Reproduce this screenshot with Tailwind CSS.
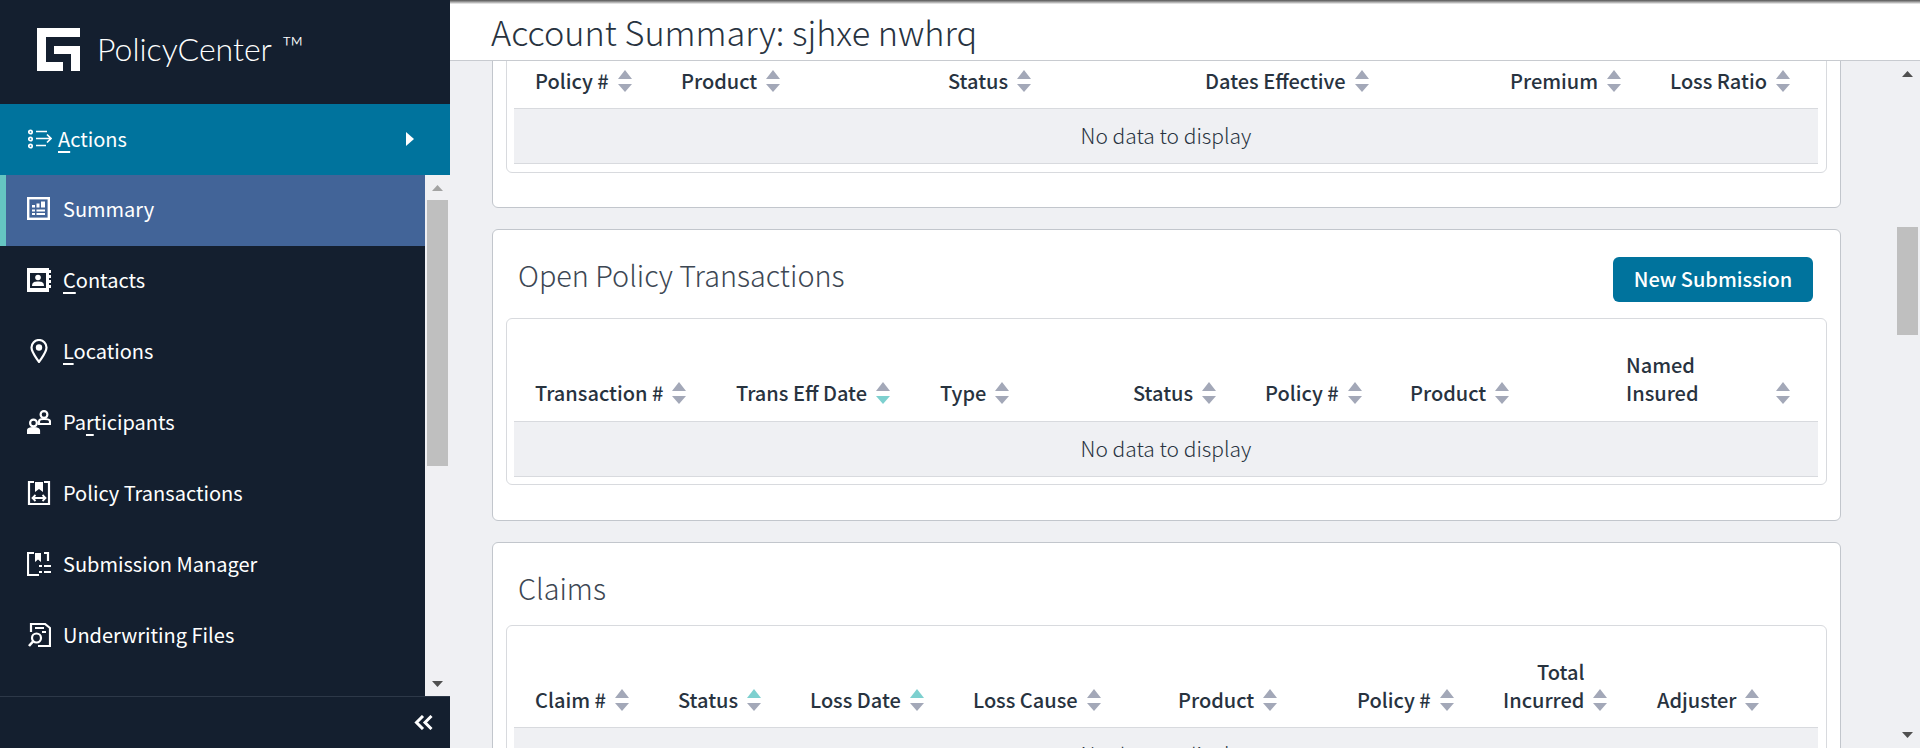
<!DOCTYPE html>
<html lang="en">
<head>
  <meta charset="UTF-8" />
  <title>Account Summary</title>
  <script src="https://cdn.jsdelivr.net/npm/@tailwindcss/browser@4"></script>
</head>
<body class="h-[748px] overflow-hidden bg-[#eff0f3] text-[#28333f] font-['Noto_Sans_CJK_SC',sans-serif]">

<!-- sort arrows, reused in every table head -->
<svg class="hidden">
  <symbol id="sort" viewBox="0 0 14 22"><path fill="#a3a8b8" d="M7 0L14 9H0ZM0 14H14L7 22Z"/></symbol>
  <symbol id="sort-asc" viewBox="0 0 14 22"><path fill="#7dd0cf" d="M7 0L14 9H0Z"/><path fill="#a3a8b8" d="M0 14H14L7 22Z"/></symbol>
  <symbol id="sort-desc" viewBox="0 0 14 22"><path fill="#a3a8b8" d="M7 0L14 9H0Z"/><path fill="#7dd0cf" d="M0 14H14L7 22Z"/></symbol>
</svg>

<div class="flex h-[748px]">

  <!-- sidebar -->
  <aside class="w-[450px] shrink-0 flex flex-col bg-[#141f2f] text-white">
    <div class="h-[104px] shrink-0 flex items-center pl-[37px] pb-[5px]">
      <svg class="w-[43px] h-[43px]" viewBox="0 0 43 43" fill="#fff"><path d="M0 0H43V9H9V34H26V43H0ZM17 18H43V43H34V26H17Z"/></svg>
      <span class="ml-[17px] mt-[10px] text-[32px] font-light font-['Lato',sans-serif] leading-none">PolicyCenter<sup class="ml-[10px] text-[30px] align-[-12px] leading-none">™</sup></span>
    </div>
    <div class="h-[71px] shrink-0 flex items-center bg-[#00739d] pl-[28px] pr-[36px] pb-[2px]">
      <svg class="w-[24px] h-[20px]" viewBox="0 0 24 20" fill="none" stroke="#fff" stroke-width="1.7"><circle cx="2.5" cy="3" r="1.7"/><circle cx="2.5" cy="10" r="1.7"/><circle cx="2.5" cy="17" r="1.7"/><path d="M8 2.5H19M8 9.5H23M19 5.5L23 9.5L19 13.5M8 16.5H18"/></svg>
      <span class="ml-[6px] text-[20px]"><u class="underline-offset-4">A</u>ctions</span>
      <svg class="ml-auto w-[8px] h-[14px]" viewBox="0 0 8 14" fill="#fff"><path d="M0 0L8 7L0 14Z"/></svg>
    </div>
    <div class="relative flex-1 min-h-0 flex overflow-hidden">
      <nav class="w-[425px] shrink-0 text-[20px]">
        <a class="h-[71px] flex items-center bg-[#426498] border-l-[6px] border-[#65c5c2] pl-[21px] pb-[4px]">
          <svg class="w-[23px] h-[23px]" viewBox="0 0 23 23" fill="none" stroke="#fff"><rect x="1.2" y="1.2" width="20.6" height="20.6" stroke-width="2.4"/><path fill="#fff" stroke="none" d="M5 8H8V10.5H5ZM9.5 6.5H12.5V10.5H9.5ZM14 4.5H18V10.5H14ZM5 12.5H8V14.5H5ZM9.5 12.5H18V14.5H9.5ZM5 16H8V18H5ZM9.5 16H18V18H9.5Z"/></svg>
          <span class="ml-[13px]">Summary</span>
        </a>
        <a class="h-[71px] flex items-center pl-[27px] pb-[4px]">
          <svg class="w-[24px] h-[24px]" viewBox="0 0 24 24" fill="#fff"><path fill-rule="evenodd" d="M0 0H22V2H24V5H22V7H24V10H22V12H24V15H22V17H24V20H22V24H0ZM3 5V20H19V5Z"/><circle cx="11" cy="9.5" r="2.8"/><path d="M5 18C5 14 8 13.5 11 13.5S17 14 17 18Z"/></svg>
          <span class="ml-[12px]"><u class="underline-offset-4">C</u>ontacts</span>
        </a>
        <a class="h-[71px] flex items-center pl-[27px] pb-[4px]">
          <svg class="w-[24px] h-[24px]" viewBox="0 0 24 24" fill="none" stroke="#fff" stroke-width="2.2"><path d="M12 23C8 17 4.5 13 4.5 8.5A7.5 7.5 0 0 1 19.5 8.5C19.5 13 16 17 12 23Z"/><circle cx="12" cy="8.5" r="3.2" fill="#fff" stroke="none"/></svg>
          <span class="ml-[12px]"><u class="underline-offset-4">L</u>ocations</span>
        </a>
        <a class="h-[71px] flex items-center pl-[27px] pb-[4px]">
          <svg class="w-[24px] h-[24px]" viewBox="0 0 24 24" fill="none" stroke="#fff" stroke-width="2.2"><circle cx="6.5" cy="13" r="3.4"/><path d="M1 23V20.5C1 18.5 3 18 6.5 18S12 18.5 12 20.5V23Z" fill="#fff"/><circle cx="17" cy="4.5" r="3.4"/><path d="M12 14V11.5C12 9.5 14 9 17 9S23 9.5 23 11.5V14Z"/></svg>
          <span class="ml-[12px]">Pa<u class="underline-offset-4">r</u>ticipants</span>
        </a>
        <a class="h-[71px] flex items-center pl-[27px] pb-[4px]">
          <svg class="w-[24px] h-[24px]" viewBox="0 0 24 24" fill="none" stroke="#fff" stroke-width="2.2"><path d="M7 1H2V23H22V1H17"/><path d="M8 1H16V11L12 8L8 11Z" fill="#fff" stroke="none"/><path d="M5.5 17H18.5M8.5 14L5.5 17L8.5 20M15.5 14L18.5 17L15.5 20" stroke-width="1.8"/></svg>
          <span class="ml-[12px]">Policy Transactions</span>
        </a>
        <a class="h-[71px] flex items-center pl-[27px] pb-[4px]">
          <svg class="w-[24px] h-[24px]" viewBox="0 0 24 24" fill="none" stroke="#fff" stroke-width="2.2"><path d="M7 1H1V23H12M17 1H21V9"/><path d="M8 1H14V10L11 7.5L8 10Z" fill="#fff" stroke="none"/><path d="M12 14H15M17 14H24M12 20H15M17 20H24"/></svg>
          <span class="ml-[12px]">Submission Manager</span>
        </a>
        <a class="h-[71px] flex items-center pl-[27px] pb-[4px]">
          <svg class="w-[24px] h-[24px]" viewBox="0 0 24 24" fill="none" stroke="#fff" stroke-width="2.2"><path d="M4 9V1H18L23 5V23H11"/><path d="M8 5H17M15 9H19"/><circle cx="9.5" cy="15" r="4.5"/><path d="M6 18.5L2 23" stroke-width="2.6"/></svg>
          <span class="ml-[12px]">Underwriting Files</span>
        </a>
        <a class="h-[71px] flex items-center pl-[27px] pb-[4px]">
          <svg class="w-[24px] h-[24px]" viewBox="0 0 24 24" fill="none" stroke="#fff" stroke-width="2.2"><circle cx="6" cy="7" r="3"/><path d="M3 23V18C3 15 7 14 12 14S21 15 21 18V23"/></svg>
        </a>
      </nav>
      <div class="w-[25px] shrink-0 bg-[#f0f0f3] flex flex-col items-center pr-[1px]">
        <div class="h-[25px] shrink-0 flex items-center justify-center"><svg class="w-[11px] h-[6px]" viewBox="0 0 11 6" fill="#a3a3a3"><path d="M5.5 0L11 6H0Z"/></svg></div>
        <div class="h-[266px] w-[21px] bg-[#bfbfbf]"></div>
        <div class="mt-auto h-[25px] flex items-center justify-center"><svg class="w-[11px] h-[6px]" viewBox="0 0 11 6" fill="#505050"><path d="M0 0H11L5.5 6Z"/></svg></div>
      </div>
    </div>
    <div class="h-[52px] shrink-0 flex items-center justify-end border-t border-[#2d3848] pr-[17px] bg-[#141f2f]">
      <svg class="w-[19px] h-[15px]" viewBox="0 0 19 15" fill="none" stroke="#fff" stroke-width="3"><path d="M9 1L2.5 7.5L9 14M17.5 1L11 7.5L17.5 14"/></svg>
    </div>
  </aside>

  <!-- main -->
  <div class="flex-1 min-w-0 flex flex-col">
    <header class="h-[61px] shrink-0 border-b border-[#c8cbd0] pl-[41px] pt-[1px] bg-gradient-to-b from-[#555555] via-white via-[7%] to-white">
      <h1 class="text-[34.3px] leading-[60px] font-extralight">Account Summary: sjhxe nwhrq</h1>
    </header>
    <div class="flex-1 min-h-0 flex">
      <div class="flex-1 min-w-0 overflow-hidden pl-[42px] pr-[56px]">
        <div class="-mt-[41px] flex flex-col gap-[21px]">

          <section class="bg-white border border-[#c2c6cc] rounded-[6px] pt-[16px] pb-[34px] px-[13px]">
            <div class="border border-[#d8dade] rounded-[6px] px-[7px] pb-[8px] pt-[17px]">
              <table class="w-[1304px] table-fixed">
                <thead>
                  <tr class="h-[53px] text-[20px] leading-[28px]">
                    <th class="w-[146px] pl-[21px] pb-[13px] align-bottom text-left font-medium"><div class="flex items-end gap-[9px]">Policy # <svg class="w-[14px] h-[22px] mb-[3px]"><use href="#sort"/></svg></div></th>
                    <th class="w-[267px] pl-[21px] pb-[13px] align-bottom text-left font-medium"><div class="flex items-end gap-[9px]">Product <svg class="w-[14px] h-[22px] mb-[3px]"><use href="#sort"/></svg></div></th>
                    <th class="w-[257px] pl-[21px] pb-[13px] align-bottom text-left font-medium"><div class="flex items-end gap-[9px]">Status <svg class="w-[14px] h-[22px] mb-[3px]"><use href="#sort"/></svg></div></th>
                    <th class="w-[305px] pl-[21px] pb-[13px] align-bottom text-left font-medium"><div class="flex items-end gap-[9px]">Dates Effective <svg class="w-[14px] h-[22px] mb-[3px]"><use href="#sort"/></svg></div></th>
                    <th class="w-[160px] pl-[21px] pb-[13px] align-bottom text-left font-medium"><div class="flex items-end gap-[9px]">Premium <svg class="w-[14px] h-[22px] mb-[3px]"><use href="#sort"/></svg></div></th>
                    <th class="w-[169px] pl-[21px] pb-[13px] align-bottom text-left font-medium"><div class="flex items-end gap-[9px]">Loss Ratio <svg class="w-[14px] h-[22px] mb-[3px]"><use href="#sort"/></svg></div></th>
                  </tr>
                </thead>
                <tbody>
                  <tr><td colspan="6" class="h-[55px] bg-[#eff0f3] border-y border-[#d8dade] text-center text-[21px] font-light">No data to display</td></tr>
                </tbody>
              </table>
            </div>
          </section>

          <section class="bg-white border border-[#c2c6cc] rounded-[6px] pb-[35px] px-[13px]">
            <div class="h-[88px] flex items-center justify-between pl-[12px] pr-[14px] pt-[11px]">
              <h2 class="text-[28.8px] font-extralight text-[#3d4753] -mt-[9px]">Open Policy Transactions</h2>
              <button class="w-[200px] h-[45px] rounded-[6px] bg-[#00739d] text-white text-[20px] font-medium">New Submission</button>
            </div>
            <div class="border border-[#d8dade] rounded-[6px] px-[7px] pb-[7px] pt-[17px]">
              <table class="w-[1304px] table-fixed">
                <thead>
                  <tr class="h-[86px] text-[20px] leading-[28px]">
                    <th class="w-[201px] pl-[21px] pb-[14px] align-bottom text-left font-medium"><div class="flex items-end gap-[9px]">Transaction # <svg class="w-[14px] h-[22px] mb-[3px]"><use href="#sort"/></svg></div></th>
                    <th class="w-[204px] pl-[21px] pb-[14px] align-bottom text-left font-medium"><div class="flex items-end gap-[9px]">Trans Eff Date <svg class="w-[14px] h-[22px] mb-[3px]"><use href="#sort-desc"/></svg></div></th>
                    <th class="w-[193px] pl-[21px] pb-[14px] align-bottom text-left font-medium"><div class="flex items-end gap-[9px]">Type <svg class="w-[14px] h-[22px] mb-[3px]"><use href="#sort"/></svg></div></th>
                    <th class="w-[132px] pl-[21px] pb-[14px] align-bottom text-left font-medium"><div class="flex items-end gap-[9px]">Status <svg class="w-[14px] h-[22px] mb-[3px]"><use href="#sort"/></svg></div></th>
                    <th class="w-[145px] pl-[21px] pb-[14px] align-bottom text-left font-medium"><div class="flex items-end gap-[9px]">Policy # <svg class="w-[14px] h-[22px] mb-[3px]"><use href="#sort"/></svg></div></th>
                    <th class="w-[216px] pl-[21px] pb-[14px] align-bottom text-left font-medium"><div class="flex items-end gap-[9px]">Product <svg class="w-[14px] h-[22px] mb-[3px]"><use href="#sort"/></svg></div></th>
                    <th class="w-[213px] pl-[21px] pr-[28px] pb-[14px] align-bottom text-left font-medium"><div class="flex items-end justify-between"><span>Named<br>Insured</span> <svg class="w-[14px] h-[22px] mb-[3px]"><use href="#sort"/></svg></div></th>
                  </tr>
                </thead>
                <tbody>
                  <tr><td colspan="7" class="h-[55px] bg-[#eff0f3] border-y border-[#d8dade] text-center text-[21px] font-light">No data to display</td></tr>
                </tbody>
              </table>
            </div>
          </section>

          <section class="bg-white border border-[#c2c6cc] rounded-[6px] pb-[35px] px-[13px]">
            <div class="h-[82px] flex items-center pl-[12px] pt-[8px]">
              <h2 class="text-[28.8px] font-extralight text-[#3d4753]">Claims</h2>
            </div>
            <div class="border border-[#d8dade] rounded-[6px] px-[7px] pb-[7px] pt-[17px]">
              <table class="w-[1304px] table-fixed">
                <thead>
                  <tr class="h-[84px] text-[20px] leading-[28px]">
                    <th class="w-[143px] pl-[21px] pb-[13px] align-bottom text-left font-medium"><div class="flex items-end gap-[9px]">Claim # <svg class="w-[14px] h-[22px] mb-[3px]"><use href="#sort"/></svg></div></th>
                    <th class="w-[132px] pl-[21px] pb-[13px] align-bottom text-left font-medium"><div class="flex items-end gap-[9px]">Status <svg class="w-[14px] h-[22px] mb-[3px]"><use href="#sort-asc"/></svg></div></th>
                    <th class="w-[163px] pl-[21px] pb-[13px] align-bottom text-left font-medium"><div class="flex items-end gap-[9px]">Loss Date <svg class="w-[14px] h-[22px] mb-[3px]"><use href="#sort-asc"/></svg></div></th>
                    <th class="w-[205px] pl-[21px] pb-[13px] align-bottom text-left font-medium"><div class="flex items-end gap-[9px]">Loss Cause <svg class="w-[14px] h-[22px] mb-[3px]"><use href="#sort"/></svg></div></th>
                    <th class="w-[179px] pl-[21px] pb-[13px] align-bottom text-left font-medium"><div class="flex items-end gap-[9px]">Product <svg class="w-[14px] h-[22px] mb-[3px]"><use href="#sort"/></svg></div></th>
                    <th class="w-[146px] pl-[21px] pb-[13px] align-bottom text-left font-medium"><div class="flex items-end gap-[9px]">Policy # <svg class="w-[14px] h-[22px] mb-[3px]"><use href="#sort"/></svg></div></th>
                    <th class="w-[154px] pl-[21px] pb-[13px] align-bottom text-left font-medium"><div class="flex items-end gap-[9px]"><span class="text-right">Total<br>Incurred</span> <svg class="w-[14px] h-[22px] mb-[3px]"><use href="#sort"/></svg></div></th>
                    <th class="w-[182px] pl-[21px] pb-[13px] align-bottom text-left font-medium"><div class="flex items-end gap-[9px]">Adjuster <svg class="w-[14px] h-[22px] mb-[3px]"><use href="#sort"/></svg></div></th>
                  </tr>
                </thead>
                <tbody>
                  <tr><td colspan="8" class="h-[55px] bg-[#eff0f3] border-y border-[#d8dade] text-center text-[21px] font-light">No data to display</td></tr>
                </tbody>
              </table>
            </div>
          </section>

        </div>
      </div>
      <div class="w-[23px] shrink-0 flex flex-col items-center pr-[2px]">
        <div class="h-[26px] shrink-0 flex items-center justify-center"><svg class="w-[11px] h-[6px]" viewBox="0 0 11 6" fill="#505050"><path d="M5.5 0L11 6H0Z"/></svg></div>
        <div class="mt-[140px] h-[108px] w-[21px] bg-[#bfbfbf]"></div>
        <div class="mt-auto h-[26px] flex items-center justify-center"><svg class="w-[11px] h-[6px]" viewBox="0 0 11 6" fill="#505050"><path d="M0 0H11L5.5 6Z"/></svg></div>
      </div>
    </div>
  </div>
</div>
</body>
</html>
